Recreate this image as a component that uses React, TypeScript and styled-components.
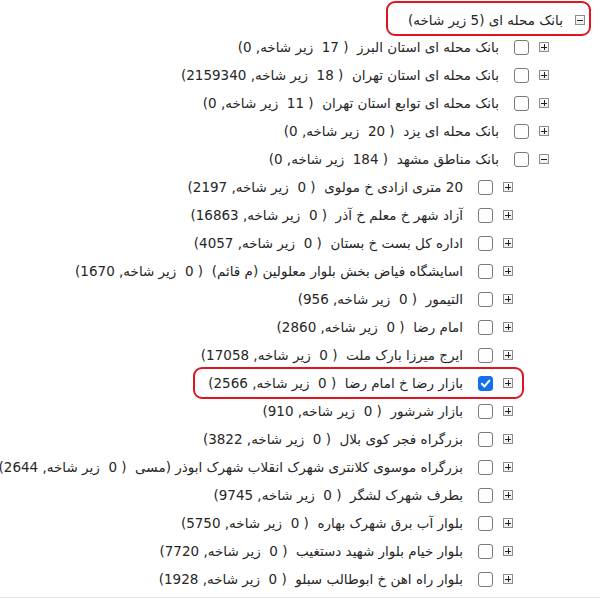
import styled, { createGlobalStyle, css } from "styled-components";

type TreeNode = {
  name: string;
  sub: number;
  total: number;
  open?: boolean;
  checked?: boolean;
  marked?: boolean;
  children?: TreeNode[];
};

const leaf = (name: string, total: number, checked = false, marked = false): TreeNode => ({
  name,
  sub: 0,
  total,
  checked,
  marked,
});

const mashhad: TreeNode[] = [
  leaf("20 متری ازادی خ مولوی", 2197),
  leaf("آزاد شهر خ معلم خ آذر", 16863),
  leaf("اداره کل بست خ بستان", 4057),
  leaf("اسایشگاه فیاض بخش بلوار معلولین (م قائم)", 1670),
  leaf("التیمور", 956),
  leaf("امام رضا", 2860),
  leaf("ایرج میرزا بارک ملت", 17058),
  leaf("بازار رضا خ امام رضا", 2566, true, true),
  leaf("بازار شرشور", 910),
  leaf("بزرگراه فجر کوی بلال", 3822),
  leaf("بزرگراه موسوی کلانتری شهرک انقلاب شهرک ابوذر (مسی", 2644),
  leaf("بطرف شهرک لشگر", 9745),
  leaf("بلوار آب برق شهرک بهاره", 5750),
  leaf("بلوار خیام بلوار شهید دستغیب", 7720),
  leaf("بلوار راه اهن خ ابوطالب سبلو", 1928),
];

const branches: TreeNode[] = [
  { name: "بانک محله ای استان البرز", sub: 17, total: 0 },
  { name: "بانک محله ای استان تهران", sub: 18, total: 2159340 },
  { name: "بانک محله ای توابع استان تهران", sub: 11, total: 0 },
  { name: "بانک محله ای یزد", sub: 20, total: 0 },
  { name: "بانک مناطق مشهد", sub: 184, total: 0, open: true, children: mashhad },
];

const GlobalStyle = createGlobalStyle`
  html, body {
    margin: 0;
    padding: 0;
    background: #fff;
    overflow: hidden;
  }
  body {
    font-family: "DejaVu Sans", Tahoma, sans-serif;
    color: #262626;
  }
`;

const Tree = styled.div`
  direction: rtl;
  height: 598px;
  padding-top: 7px;
  box-sizing: border-box;
  border-bottom: 1px solid #e4e4e4;
  overflow: hidden;
`;

const Row = styled.div<{ $level: number; $root?: boolean }>`
  display: flex;
  align-items: center;
  height: ${({ $root }) => ($root ? 26 : 28)}px;
  padding-right: ${({ $level }) => 15 + $level * 36}px;
  white-space: pre;
`;

const Item = styled.span<{ $marked?: boolean; $root?: boolean }>`
  position: relative;
  display: inline-flex;
  align-items: center;

  ${({ $marked, $root }) =>
    $marked &&
    css`
      &::after {
        content: "";
        position: absolute;
        top: ${$root ? -11 : -8}px;
        bottom: ${$root ? -8 : -8}px;
        right: ${$root ? -6 : -11}px;
        left: ${$root ? -22 : -15}px;
        border: 2.5px solid #e0141e;
        border-radius: 9px;
        pointer-events: none;
      }
    `}
`;

const Toggle = styled.span<{ $open?: boolean }>`
  position: relative;
  flex: none;
  width: 10px;
  height: 10px;
  box-sizing: border-box;
  border: 1px solid #8c8c8c;
  background: linear-gradient(#ffffff, #ececec);

  &::before {
    content: "";
    position: absolute;
    left: 1px;
    right: 1px;
    top: 3.5px;
    height: 1.2px;
    background: #222;
  }

  ${({ $open }) =>
    !$open &&
    css`
      &::after {
        content: "";
        position: absolute;
        top: 1px;
        bottom: 1px;
        left: 3.5px;
        width: 1.2px;
        background: #222;
      }
    `}
`;

const Check = styled.span<{ $checked?: boolean }>`
  flex: none;
  display: inline-flex;
  align-items: center;
  justify-content: center;
  width: 15px;
  height: 15px;
  margin-right: 10px;
  box-sizing: border-box;
  border-radius: 3px;
  border: 1px solid ${({ $checked }) => ($checked ? "#1370ea" : "#7a7a7a")};
  background: ${({ $checked }) => ($checked ? "#1370ea" : "#fff")};
`;

const Label = styled.span<{ $root?: boolean }>`
  margin-right: ${({ $root }) => ($root ? 12 : 15)}px;
  font-size: 13.5px;
  line-height: 16px;
`;

const CheckMark = () => (
  <svg width="11" height="11" viewBox="0 0 12 12">
    <path d="M2 6.3 L4.9 9.2 L10.2 2.8" fill="none" stroke="#fff" strokeWidth="2.2" strokeLinecap="round" strokeLinejoin="round" />
  </svg>
);

const Branch = ({ node, level }: { node: TreeNode; level: number }) => (
  <>
    <Row $level={level}>
      <Item $marked={node.marked}>
        <Toggle $open={node.open} />
        <Check $checked={node.checked}>{node.checked && <CheckMark />}</Check>
        <Label>{`${node.name}  ( ${node.sub}  زیر شاخه, ${node.total})`}</Label>
      </Item>
    </Row>
    {node.open && node.children?.map((child, i) => <Branch key={i} node={child} level={level + 1} />)}
  </>
);

const App = () => {
  return (
    <>
      <GlobalStyle />
      <Tree>
        <Row $level={0} $root>
          <Item $marked $root>
            <Toggle $open />
            <Label $root>بانک محله ای (5 زیر شاخه)</Label>
          </Item>
        </Row>
        {branches.map((node, i) => (
          <Branch key={i} node={node} level={1} />
        ))}
      </Tree>
    </>
  );
};

export default App;
